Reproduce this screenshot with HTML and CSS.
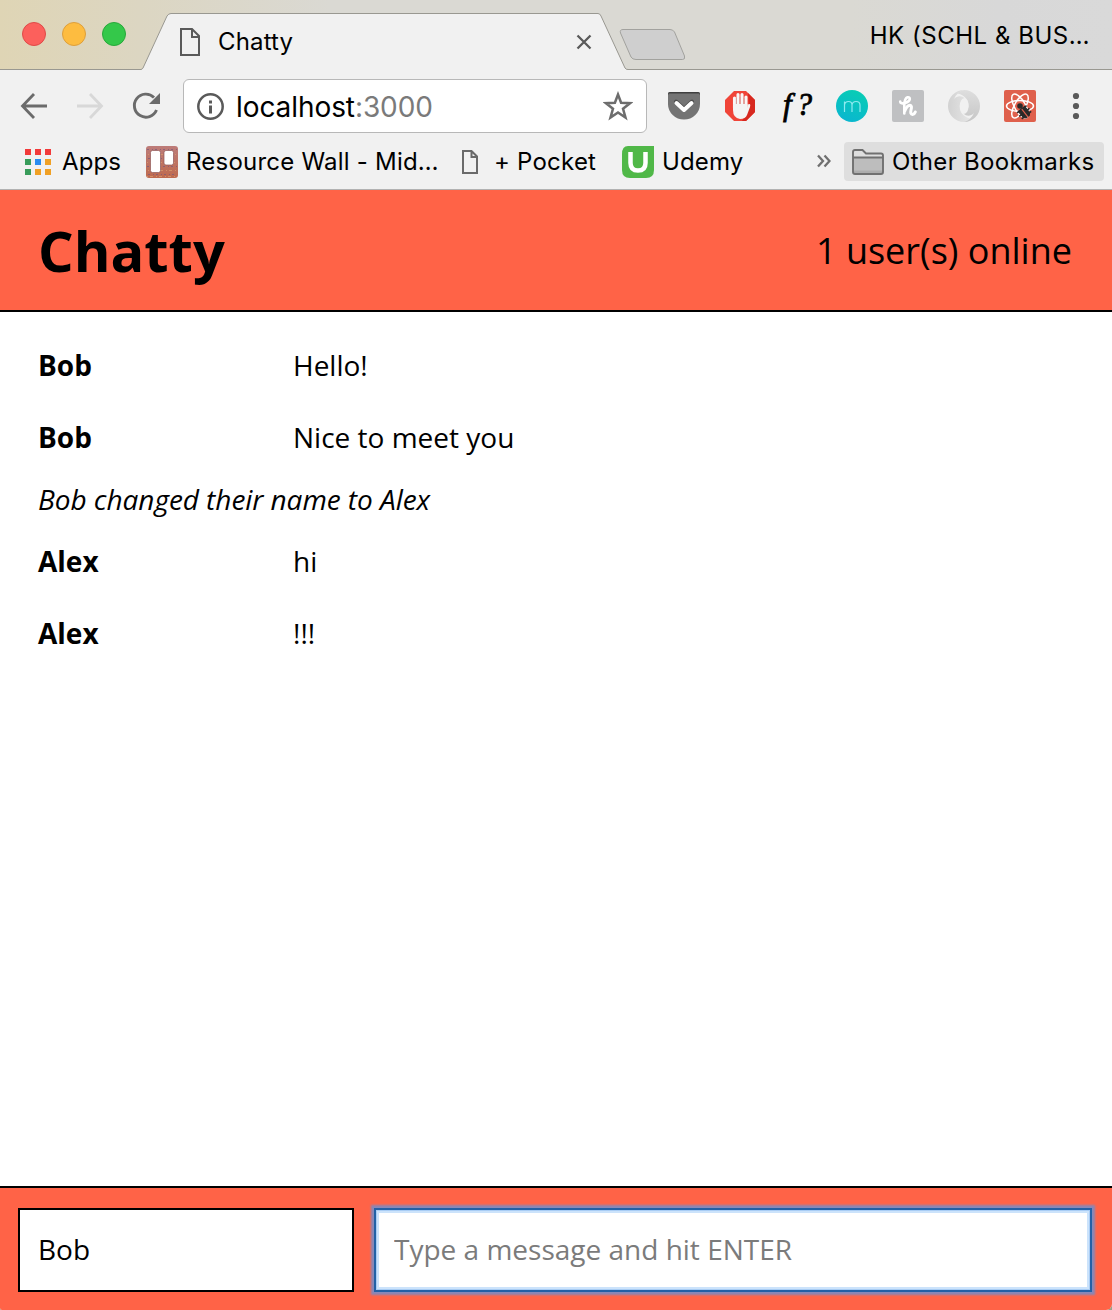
FILE: index.html
```
<!DOCTYPE html>
<html lang="en">
<head>
<meta charset="utf-8">
<title>Chatty</title>
<link rel="stylesheet" href="styles.css">
</head>
<body>
<div class="window">
  <div class="tabstrip">
    <div class="lights"><i class="light red"></i><i class="light yellow"></i><i class="light green"></i></div>
    <div class="tab">
      <svg class="tab-shape" width="492" height="58" viewBox="0 0 492 58"><path d="M0 58V57.500H2Q3.500 57 4 56L28 4Q29.500 1.500 32 1.500H459Q461 1.500 462 4L486 56Q487 57.500 489 57.500H492V58Z" fill="#f1f1f1"/><path d="M0 57.500H2Q3.500 57 4 56L28 4Q29.500 1.500 32 1.500H459Q461 1.500 462 4L486 56Q487 57.500 489 57.500H492" fill="none" stroke="#999891"/></svg>
      <svg class="tab-icon" width="20" height="28" viewBox="0 0 20 28"><path d="M1 1H12L19 8V27H1ZM12 1V9H19" fill="none" stroke="#5a5a5a" stroke-width="2"/></svg>
      <span class="tab-title">Chatty</span>
      <svg class="tab-close" width="16" height="16" viewBox="0 0 16 16"><path d="M1.500 1.500L14.500 14.500M14.500 1.500L1.500 14.500" stroke="#5a5a5a" stroke-width="2.300"/></svg>
    </div>
    <svg class="new-tab" width="68" height="34" viewBox="0 0 68 34"><path d="M4 1.500H51Q54 1.500 55.500 4L65.500 28Q66.500 31.500 63.500 31.500H17Q13.500 31.500 12 29L1.500 5Q.500 1.500 4 1.500Z" fill="#cfcfcf" stroke="#a2a29e"/></svg>
    <span class="profile">HK (SCHL &amp; BUS…</span>
  </div>

  <div class="toolbar">
    <svg width="28" height="28" viewBox="0 0 28 28"><path d="M27 14H3M14 2L2.500 14L14 26" fill="none" stroke="#6b6b6b" stroke-width="2.800"/></svg>
    <svg width="28" height="28" viewBox="0 0 28 28"><path d="M1 14H25M14 2L25.500 14L14 26" fill="none" stroke="#d8d8d8" stroke-width="2.800"/></svg>
    <svg width="28" height="28" viewBox="0 0 28 28"><path d="M22 5.500A11.500 11.500 0 1 0 24.500 18" fill="none" stroke="#6b6b6b" stroke-width="2.900"/><path d="M28 1V12H17Z" fill="#6b6b6b"/></svg>
    <div class="address">
      <svg width="28" height="28" viewBox="0 0 28 28"><circle cx="14.500" cy="14.500" r="12.200" fill="none" stroke="#5a5a5a" stroke-width="2.500"/><path d="M13 8.500h3v3h-3zM13 13.500h3v8h-3z" fill="#5a5a5a"/></svg>
      <span class="url">localhost<span class="port">:3000</span></span>
      <svg class="star" width="30" height="30" viewBox="0 0 30 30"><path d="M15 3.500L18.100 11.800L27 12.200L20 17.700L22.500 26.500L15 21.500L7.500 26.500L10 17.700L3 12.200L11.900 11.800Z" fill="none" stroke="#6d6d6d" stroke-width="2.500"/></svg>
    </div>
    <div class="extensions">
      <svg width="32" height="32" viewBox="0 0 32 32"><path d="M0 4Q0 2 2 2H30Q32 2 32 4V14A16 15.500 0 0 1 0 14Z" fill="#747474"/><path d="M0 5V4Q0 2 2 2H30Q32 2 32 4V5L31 3.500H1Z" fill="#3f3f3f"/><path d="M8 13L16 20.500L24 13" transform="translate(0 -1.500)" fill="none" stroke="#4f4f4f" stroke-width="4" stroke-linecap="round"/><path d="M8.500 13L16 20L23.500 13" fill="none" stroke="#fff" stroke-width="4" stroke-linecap="round" stroke-linejoin="round"/></svg>
      <svg width="32" height="32" viewBox="0 0 32 32"><path d="M10 1H22L31 10V22L22 31H10L1 22V10Z" fill="#f04438"/><path d="M24 3L31 10V22L22 31H18L25 17Z" fill="#d7281f"/><path d="M10.500 18V8M14 16V4.500M18 16V4.500M22 17V7" stroke="#f8f8f8" stroke-width="3.100" stroke-linecap="round"/><path d="M12.300 8V16M16 7V16M20 8V16" stroke="#c99b98" stroke-width=".7"/><path d="M9 14H23.500V18L24 14.500Q27 13 26 17L23 25Q21.500 29 16 29Q9 28 9 20Z" fill="#f4f4f4"/></svg>
      <span class="whatfont">f?</span>
      <svg width="32" height="32" viewBox="0 0 32 32"><defs><linearGradient id="teal" x1=".7" y1="0" x2=".3" y2="1"><stop stop-color="#08cdb4"/><stop offset="1" stop-color="#0ab6d0"/></linearGradient></defs><circle cx="16" cy="16" r="16" fill="url(#teal)"/><path d="M8.500 22V11.500M8.500 15Q9 11.500 12.500 11.500Q16 11.500 16 15V22M16 15Q16.500 11.500 20 11.500Q24 11.500 24 15V22" fill="none" stroke="#8eeaf0" stroke-width="1.200"/></svg>
      <svg width="32" height="32" viewBox="0 0 32 32"><rect width="32" height="32" rx="2" fill="#bfc0c2"/><path d="M8.200 11.500Q8.500 14 12 13.200Q17.500 12 17.800 9Q17.800 6.800 15.500 7.300Q12.500 8.500 12.300 15V23.500" fill="none" stroke="#fff" stroke-width="2.600" stroke-linecap="round"/><path d="M12.800 21Q15 15.500 18 15.300Q20.300 15.500 19 20Q18 24.500 20.500 24.500Q22.500 24.200 23.300 22" fill="none" stroke="#fff" stroke-width="3" stroke-linecap="round"/></svg>
      <svg width="32" height="32" viewBox="0 0 32 32"><defs><linearGradient id="ring"><stop stop-color="#d2d2d2"/><stop offset="1" stop-color="#e6e6e6"/></linearGradient><linearGradient id="ring2" x1="0" y1="0" x2="0" y2="1"><stop stop-color="#dedede"/><stop offset="1" stop-color="#c6c6c6"/></linearGradient></defs><path d="M16 0A16 16 0 0 0 16 32Q20 31.500 23 28.500C15 27.500 10.500 21 12 14Q13.500 9 17 8.500C13 5 9 6 6 9Q9 2 16 0Z" fill="url(#ring)"/><path d="M16 32A16 16 0 0 0 16 0Q12 .500 9 3.500C17 4.500 21.500 11 20.500 17Q19 23 15.500 23.500C19 27 23 26 26 23Q23 30 16 32Z" fill="url(#ring2)"/><ellipse cx="16.200" cy="16" rx="4.300" ry="7.700" fill="#f1f1f1"/></svg>
      <svg width="32" height="32" viewBox="0 0 32 32"><rect width="32" height="32" rx="2" fill="#df604c"/><g fill="none" stroke="#fff" stroke-width="1.500"><ellipse cx="16" cy="16" rx="13.500" ry="5.500"/><ellipse cx="16" cy="16" rx="13.500" ry="5.500" transform="rotate(60 16 16)"/><ellipse cx="16" cy="16" rx="13.500" ry="5.500" transform="rotate(120 16 16)"/></g><circle cx="16" cy="16" r="2.800" fill="#292929"/><g transform="rotate(-38 20 22)" fill="#292929" stroke="#292929"><path d="M16 18H24V26L22 28H18L16 26Z"/><path d="M14 18.500H26M13.500 22.500H26.500M14 26H26" stroke-width="1.500"/><path d="M20 18.500V28.500" stroke="#df604c" stroke-width="1.200"/></g></svg>
    </div>
    <svg class="menu" width="8" height="28" viewBox="0 0 8 28"><g fill="#5a5a5a"><circle cx="4" cy="4" r="3.100"/><circle cx="4" cy="14" r="3.100"/><circle cx="4" cy="24" r="3.100"/></g></svg>
  </div>

  <div class="bookmarks">
    <span class="bookmark apps"><svg width="26" height="26" viewBox="0 0 26 26"><path d="M0 0h6v6H0zM10 0h6v6h-6zM20 0h6v6h-6z" fill="#f23a3a"/><path d="M0 10h6v6H0zM0 20h6v6H0z" fill="#389c5a"/><path d="M10 10h6v6h-6z" fill="#288cf0"/><path d="M20 10h6v6h-6zM10 20h6v6h-6zM20 20h6v6h-6z" fill="#f0a024"/></svg><span class="label">Apps</span></span>
    <span class="bookmark wall"><svg width="32" height="32" viewBox="0 0 32 32"><defs><linearGradient id="brick" x1="0" y1="0" x2="0" y2="1"><stop stop-color="#bd7c79"/><stop offset="1" stop-color="#bf6a4e"/></linearGradient></defs><rect width="32" height="32" rx="3" fill="url(#brick)"/><path d="M1 3.500H31M2 12.500H31M1 20.500H31M2 28.500H31" stroke="#79597c" stroke-opacity=".7" stroke-dasharray="2 3 1 2"/><path d="M2 8.500H31M1 16.500H31M2 24.500H31M1 30.500H31" stroke="#d8996d" stroke-opacity=".8" stroke-dasharray="1 2 3 3"/><rect x="4.500" y="4.500" width="10" height="22" rx="2" fill="#fff" stroke="#8f5857" stroke-width=".7"/><rect x="18" y="4.500" width="9.500" height="14.500" rx="2" fill="#fff" stroke="#8f5857" stroke-width=".7"/></svg><span class="label">Resource Wall - Mid…</span></span>
    <span class="bookmark pocket"><svg width="16" height="24" viewBox="0 0 16 24"><path d="M1 1H9.500L15 6.500V23H1ZM9.500 1V7H15" fill="none" stroke="#6a6a6a" stroke-width="2"/></svg><span class="label">+ Pocket</span></span>
    <span class="bookmark udemy"><svg width="32" height="32" viewBox="0 0 32 32"><path d="M6 0H32V24Q32 32 24 32H8Q0 32 0 24V8Q0 0 6 0Z" fill="#50b848"/><path d="M8.500 6V17Q8.500 24.500 16 24.500Q23.500 24.500 23.500 17V6" fill="none" stroke="#fff" stroke-width="4.500"/></svg><span class="label">Udemy</span></span>
    <svg class="more" width="14" height="14" viewBox="0 0 14 14"><path d="M1 1.500L6 7L1 12.500M7.500 1.500L12.500 7L7.500 12.500" fill="none" stroke="#707070" stroke-width="2.300"/></svg>
    <span class="bookmark other"><svg width="32" height="26" viewBox="0 0 32 26"><path d="M1 24V3Q1 1 3 1H11L14 4.500H29Q31 4.500 31 7V24Q31 25 29 25H3Q1 25 1 24Z" fill="#dedede"/><path d="M1 8.500H31V24H1Z" fill="#bdbdbd"/><path d="M2 21.500H30V24H2Z" fill="#acacac"/><path d="M1 23V3Q1 1 3 1H10.500L14 4.500H29Q31 4.500 31 6.500V23Q31 25 29 25H3Q1 25 1 23ZM1 8.500H31" fill="none" stroke="#707070" stroke-width="1.900"/></svg><span class="label">Other Bookmarks</span></span>
  </div>

  <header class="nav"><h1>Chatty</h1><span class="online">1 user(s) online</span></header>

  <main class="messages">
    <div class="message"><span class="user">Bob</span><span>Hello!</span></div>
    <div class="message"><span class="user">Bob</span><span>Nice to meet you</span></div>
    <div class="message system">Bob changed their name to Alex</div>
    <div class="message"><span class="user">Alex</span><span>hi</span></div>
    <div class="message"><span class="user">Alex</span><span>!!!</span></div>
  </main>

  <footer class="chatbar">
    <input class="name" type="text" value="Bob" aria-label="Name">
    <input class="compose" type="text" placeholder="Type a message and hit ENTER" aria-label="Message">
  </footer>
</div>
</body>
</html>
```
FILE: styles.css
```
* { box-sizing: border-box; }
body { margin: 0; background: #9aa28c; color: #000; font-family: "Open Sans", sans-serif; font-size: 28px; }
svg { display: block; flex: none; }
.window { width: 1112px; height: 1310px; display: flex; flex-direction: column; background: #fff; border-radius: 0 0 6px 2px; overflow: hidden; }

.tabstrip, .toolbar, .bookmarks { font-family: Inter, "Liberation Sans", sans-serif; flex: none; display: flex; font-size: 24px; white-space: nowrap; }
.tabstrip { height: 70px; background: linear-gradient(90deg, #dfd5b5 0, #dcd6c2 140px, #dad9d3 330px, #dad9d3 850px, #d8d8d8 1000px, #d9d9d9 100%); border-bottom: 1px solid #999891; }
.lights { display: flex; gap: 16px; padding: 22px 0 0 22px; width: 139px; }
.light { width: 24px; height: 24px; border-radius: 50%; border: 1px solid; }
.red { background: #fc605c; border-color: #df4a48; }
.yellow { background: #fdbc40; border-color: #dd9f3c; }
.green { background: #34c84a; border-color: #28a83a; }
.tab { position: relative; width: 492px; height: 58px; margin-top: 12px; padding: 2px 39px 0 41px; display: flex; align-items: center; }
.tab-shape { position: absolute; left: 0; top: 0; }
.tab-icon, .tab-title, .tab-close { position: relative; }
.tab-title { margin-left: 18px; letter-spacing: .15px; line-height: 30px; }
.tab-close { margin-left: auto; }
.new-tab { margin: 28px 0 0 -12px; }
.profile { margin: 21px 22px 0 auto; line-height: 29px; letter-spacing: .52px; }

.toolbar { height: 72px; background: #f1f1f1; padding-left: 20px; align-items: center; gap: 28px; }
.address { width: 464px; height: 54px; margin-left: -5px; background: #fff; border: 1px solid #b8b8b8; border-radius: 6px; display: flex; align-items: center; padding: 0 13px 0 12px; }
.url { margin-left: 12px; padding-top: 2px; font-size: 28px; letter-spacing: -.08px; }
.port { color: #7a7a7a; }
.star { margin-left: auto; }
.extensions { display: flex; gap: 24px; margin-left: -7px; }
.whatfont { width: 32px; height: 32px; padding-left: 3px; font: italic 400 31px/29px "Liberation Serif", serif; -webkit-text-stroke: .8px #000; letter-spacing: 5px; }
.menu { margin-left: 8px; }

.bookmarks { height: 48px; background: #f1f1f1; border-bottom: 1px solid #b2b2b2; padding: 0 8px 0 25px; }
.bookmark { height: 39px; display: flex; align-items: center; gap: 8px; }
.label { letter-spacing: .12px; }
.apps { width: 121px; gap: 11px; }
.wall { width: 316px; }
.wall .label { letter-spacing: .22px; }
.pocket { width: 160px; gap: 16px; }
.pocket .label { letter-spacing: .22px; }
.more { margin: 12px 13px 0 auto; }
.other { width: 260px; background: #dedede; border-radius: 4px; padding-left: 8px; }
.other .label { letter-spacing: .32px; }

.nav { flex: none; height: 122px; background: #ff6347; border-bottom: 2px solid #000; padding: 0 40px 0 38px; display: flex; align-items: center; justify-content: space-between; }
.nav h1 { margin: 0; font-size: 56px; line-height: 76px; }
.online { font-size: 36px; }
.messages { flex: 1; padding: 17px 38px 0; line-height: 38px; }
.message { display: flex; height: 72px; align-items: center; }
.user { width: 255px; font-weight: 700; }
.system { height: 52px; font-style: italic; letter-spacing: -.05px; }
.chatbar { flex: none; height: 124px; background: #ff6347; border-top: 2px solid #000; padding: 20px 20px 0 18px; display: flex; gap: 20px; }
.chatbar input { height: 84px; padding: 0 18px 2px; border: 2px solid #000; border-radius: 0; background: #fff; font: 28px "Open Sans", sans-serif; outline: none; }
.chatbar .name { width: 336px; }
.chatbar .compose { width: 718px; border-color: #2360a5; box-shadow: 0 0 2px 3px #8788b8, inset 0 0 0 1px #a9cdf5, inset 0 0 0 3px #cce3fb; }
.compose::placeholder { color: #7b7b7b; opacity: 1; }
```
